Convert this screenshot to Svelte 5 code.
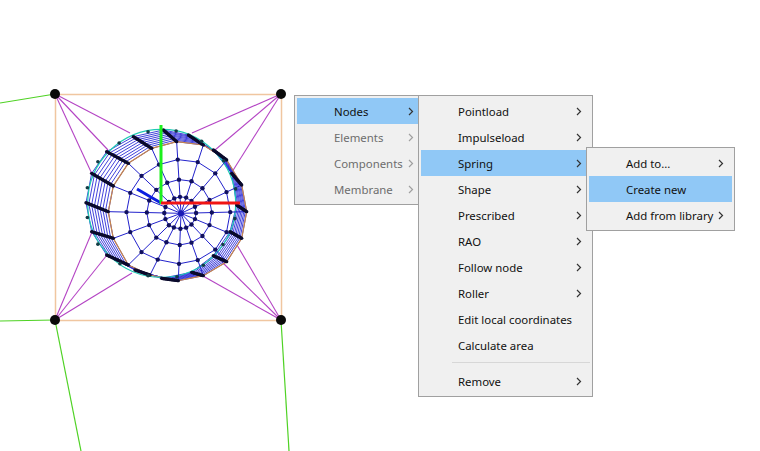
<script>
	// bar ends as read from the picture: inner ring end, outer ring end
	const z = (x, y) => [70 + x / 3, 110 + y / 3];
	const raw = [
		[280, 60, 320, 95], [355, 75, 400, 105], [430, 120, 470, 150], [485, 190, 515, 225],
		[500, 285, 530, 305], [480, 365, 515, 385], [430, 437, 470, 455], [365, 487, 400, 497],
		[275, 505, 325, 512], [195, 480, 240, 495], [110, 435, 175, 465], [65, 365, 130, 385],
		[48, 278, 115, 305], [65, 190, 130, 228], [110, 125, 175, 160], [190, 80, 245, 115]
	];
	const bars = raw.map((b) => ({ a: z(b[0], b[1]), b: z(b[2], b[3]) }));
	const hub = z(333, 310);
	const lerp = (p, q, t) => [p[0] + (q[0] - p[0]) * t, p[1] + (q[1] - p[1]) * t];
	const poly = (pts) => pts.map((p) => p[0].toFixed(1) + ',' + p[1].toFixed(1)).join(' ');

	const steps = [0, 0.125, 0.25, 0.375, 0.5, 0.625, 0.75, 0.875, 1];
	const stripes = steps.map((t) => poly([...bars, bars[0]].map((b) => lerp(b.a, b.b, t))));
	const barDots = bars.flatMap((b) => steps.map((t) => lerp(b.a, b.b, t)));

	const fractions = [0.23, 0.47, 0.75];
	const rings = fractions.map((f) => {
		const pts = bars.map((b) => lerp(hub, b.b, f));
		return [...pts, pts[0]];
	});
	const ringDots = rings.flatMap((r) => r.slice(0, -1));

	const edge = poly([...bars, bars[0]].map((b) => b.b));
	const rimCenter = [161.7, 203.3];
	const rimDots = bars.map((b, i) => {
		const m = lerp(b.a, bars[(i + 1) % 16].a, 0.5);
		const dx = m[0] - rimCenter[0];
		const dy = m[1] - rimCenter[1];
		const d = Math.hypot(dx, dy);
		return [m[0] + (dx / d) * 1.5, m[1] + (dy / d) * 1.5];
	});

	const corners = [
		{ at: [55, 94], to: [[92, 174], [108, 150], [130, 133]] },
		{ at: [281, 94], to: [[192, 133], [215, 150], [232, 172]] },
		{ at: [55, 320], to: [[92, 232], [107, 255], [132, 273]] },
		{ at: [281, 320], to: [[237, 245], [222, 262], [203, 276]] }
	];
	const cables = [
		[0, 103, 55, 94], [0, 321, 55, 320], [55, 320, 81, 451], [281, 320, 289, 451]
	];

	const rootItems = [
		{ label: 'Nodes', sub: true, active: true },
		{ label: 'Elements', sub: true, disabled: true },
		{ label: 'Components', sub: true, disabled: true },
		{ label: 'Membrane', sub: true, disabled: true }
	];
	const nodeItems = [
		{ label: 'Pointload', sub: true },
		{ label: 'Impulseload', sub: true },
		{ label: 'Spring', sub: true, active: true },
		{ label: 'Shape', sub: true },
		{ label: 'Prescribed', sub: true },
		{ label: 'RAO', sub: true },
		{ label: 'Follow node', sub: true },
		{ label: 'Roller', sub: true },
		{ label: 'Edit local coordinates' },
		{ label: 'Calculate area' },
		{ separator: true },
		{ label: 'Remove', sub: true }
	];
	const springItems = [
		{ label: 'Add to...', sub: true },
		{ label: 'Create new', active: true },
		{ label: 'Add from library', sub: true }
	];
	const menus = [
		{ cls: 'root', items: rootItems },
		{ cls: 'nodes', items: nodeItems },
		{ cls: 'spring', items: springItems }
	];
</script>

<div class="screen">
	<svg class="model" width="760" height="451" viewBox="0 0 760 451">
		<rect x="55.5" y="94.5" width="226" height="226" fill="none" stroke="#f0c6a0" stroke-width="1.5" />
		{#each cables as c}
			<line x1={c[0]} y1={c[1]} x2={c[2]} y2={c[3]} stroke="#4fd224" stroke-width="1.2" />
		{/each}
		{#each corners as c}
			{#each c.to as t}
				<line x1={c.at[0]} y1={c.at[1]} x2={t[0]} y2={t[1]} stroke="#b444c4" stroke-width="1.1" />
			{/each}
		{/each}

		{#each stripes as s}
			<polyline points={s} fill="none" stroke="#2c2cd6" stroke-width="0.9" />
		{/each}
		<polyline points={edge} fill="none" stroke="#c8854a" stroke-width="1.2" />
		<circle cx={rimCenter[0]} cy={rimCenter[1]} r="74" fill="none" stroke="#1fc9b4" stroke-width="1.2" />

		{#each bars as b}
			<line x1={hub[0]} y1={hub[1]} x2={b.b[0]} y2={b.b[1]} stroke="#2222cc" stroke-width="1" />
			<line x1={b.a[0]} y1={b.a[1]} x2={b.b[0]} y2={b.b[1]} stroke="#0a0a2c" stroke-width="3.2" />
		{/each}
		{#each rings as r}
			<polyline points={poly(r)} fill="none" stroke="#2222cc" stroke-width="1" />
		{/each}
		{#each ringDots as d}
			<circle cx={d[0]} cy={d[1]} r="2.2" fill="#10105e" />
		{/each}
		{#each barDots as d}
			<circle cx={d[0]} cy={d[1]} r="1.7" fill="#0a0a2c" />
		{/each}
		{#each rimDots as d}
			<circle cx={d[0]} cy={d[1]} r="1.8" fill="#123c44" />
		{/each}
		<circle cx={hub[0]} cy={hub[1]} r="3" fill="#1a1ab4" />

		<line x1="161" y1="203" x2="137" y2="189" stroke="#0a1ee0" stroke-width="3" />
		<line x1="161" y1="204" x2="161" y2="125" stroke="#1cf01c" stroke-width="3" />
		<line x1="161" y1="203" x2="240" y2="203" stroke="#f01414" stroke-width="3" />

		{#each corners as c}
			<circle cx={c.at[0]} cy={c.at[1]} r="5" fill="#0a0a0a" />
		{/each}
	</svg>

	{#each menus as menu}
		<ul class="menu {menu.cls}">
			{#each menu.items as item}
				{#if item.separator}
					<li class="separator"></li>
				{:else}
					<li class="item" class:active={item.active} class:disabled={item.disabled}>
						<span>{item.label}</span>
						{#if item.sub}
							<svg class="chevron" width="6" height="9" viewBox="0 0 6 9">
								<path d="M1 1 L4.5 4.5 L1 8" fill="none" stroke="currentColor" stroke-width="1.2" />
							</svg>
						{/if}
					</li>
				{/if}
			{/each}
		</ul>
	{/each}
</div>

<style>
	:global(body) {
		background: #fff;
	}

	.screen {
		position: relative;
		width: 760px;
		height: 451px;
		overflow: hidden;
		font-family: "Noto Sans", "Open Sans", sans-serif;
		font-size: 11.4px;
		color: #111;
	}

	.model {
		display: block;
	}

	.menu {
		position: absolute;
		box-sizing: border-box;
		margin: 0;
		padding: 2px;
		list-style: none;
		background: #f0f0f0;
		border: 1px solid #a0a0a0;
	}

	.root {
		left: 294px;
		top: 95px;
		width: 125px;
		padding-right: 0;
	}

	.root .item {
		padding-right: 4px;
	}

	.nodes {
		left: 418px;
		top: 95px;
		width: 175px;
	}

	.spring {
		left: 586px;
		top: 147px;
		width: 149px;
	}

	.item {
		display: flex;
		align-items: center;
		justify-content: space-between;
		height: 26px;
		padding: 0 8px 0 37px;
		white-space: nowrap;
	}

	.active {
		background: #90c8f6;
	}

	.disabled {
		color: #6d6d6d;
	}

	.chevron {
		flex: none;
		color: #333;
	}

	.disabled .chevron {
		color: #a0a0a0;
	}

	.separator {
		height: 1px;
		margin: 4px 0 5px 31px;
		background: #d7d7d7;
	}
</style>
